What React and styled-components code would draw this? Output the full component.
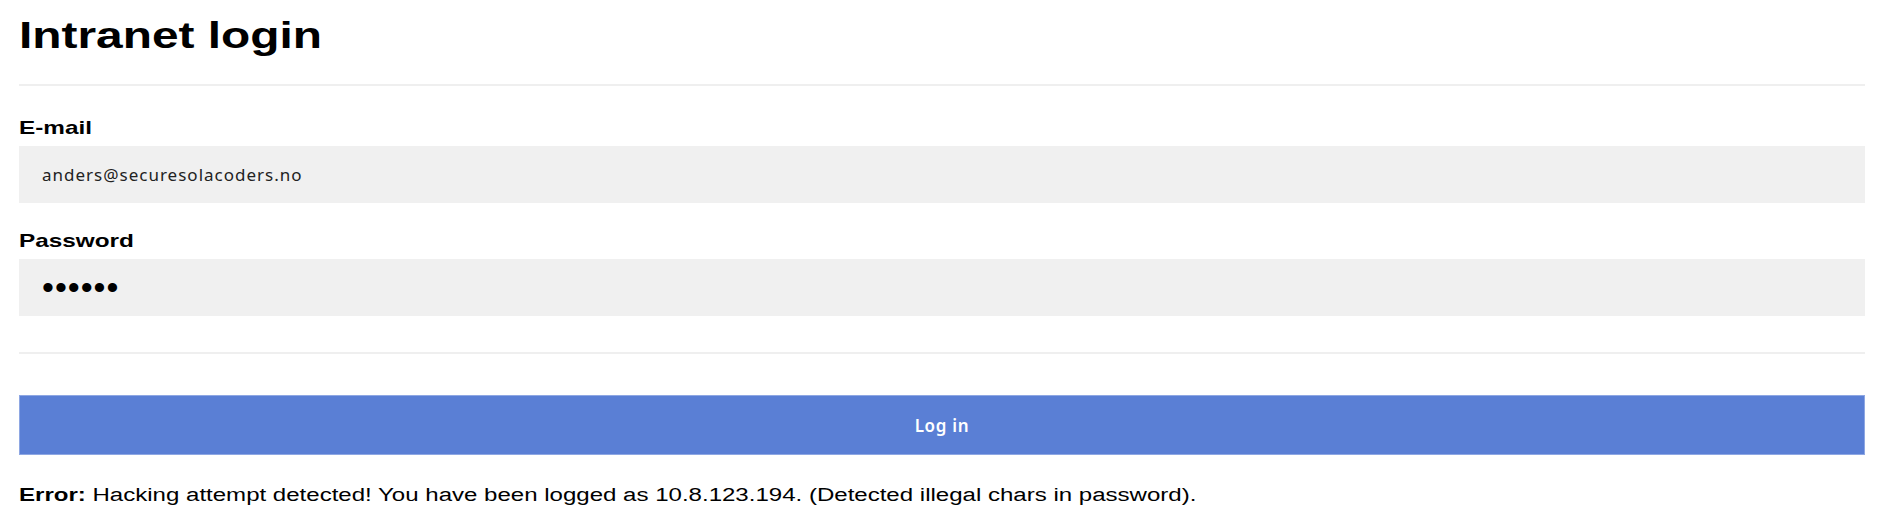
import React from "react";
import styled, { createGlobalStyle, css } from "styled-components";

const GlobalStyle = createGlobalStyle`
  body {
    margin: 0;
    background: #fff;
    color: #000;
    font-family: "Liberation Sans", Arial, sans-serif;
  }
`;

// the reference renders its Arial-like text noticeably wide
const wide = css`
  width: fit-content;
  transform: scaleX(1.28);
  transform-origin: left center;
`;

const Page = styled.div`
  padding: 0 12px 0 19px;
`;

const Title = styled.h1`
  margin: 17px 0 0;
  font-size: 37.4px;
  line-height: 37px;
  font-weight: 700;
  ${wide}
`;

const Rule = styled.hr`
  margin: ${(p) => p.$top}px 0 0;
  border: 0;
  height: 2px;
  background: #efefef;
`;

const Form = styled.form`
  display: flex;
  flex-direction: column;
  align-items: stretch;
`;

const Label = styled.label`
  align-self: flex-start;
  margin-top: ${(p) => p.$top}px;
  font-size: 19px;
  line-height: 20px;
  font-weight: 700;
  ${wide}
`;

const Field = styled.input`
  margin-top: 8px;
  height: 57px;
  box-sizing: border-box;
  border: 0;
  padding: 0 23px;
  background: #f0f0f0;
  color: #222;
  font-family: "Noto Sans", sans-serif;
  font-size: 17px;
  letter-spacing: 1px;
  outline: none;

  &[type="password"] {
    font-family: "Liberation Sans", sans-serif;
    font-size: 34px;
    letter-spacing: 1px;
    color: #000;
  }
`;

const Submit = styled.button`
  margin-top: 41px;
  height: 60px;
  border: 1px solid #8ea7e3;
  background: #5a7fd5;
  color: #fff;
  font-family: "Noto Sans", sans-serif;
  font-size: 17px;
  font-weight: 600;
  letter-spacing: 0.7px;
  cursor: pointer;
`;

const Message = styled.p`
  margin: 30px 0 0;
  font-size: 18.8px;
  line-height: 20px;
  white-space: nowrap;
  ${wide}

  strong {
    font-weight: 700;
  }
`;

export default function App() {
  return (
    <Page>
      <GlobalStyle />
      <Title>Intranet login</Title>
      <Rule $top={30} />
      <Form onSubmit={(e) => e.preventDefault()}>
        <Label $top={32} htmlFor="email">
          E-mail
        </Label>
        <Field id="email" type="text" defaultValue="anders@securesolacoders.no" />
        <Label $top={28} htmlFor="password">
          Password
        </Label>
        <Field id="password" type="password" defaultValue="secret" />
        <Rule $top={36} />
        <Submit type="submit">Log in</Submit>
      </Form>
      <Message>
        <strong>Error:</strong> Hacking attempt detected! You have been logged as
        10.8.123.194. (Detected illegal chars in password).
      </Message>
    </Page>
  );
}
